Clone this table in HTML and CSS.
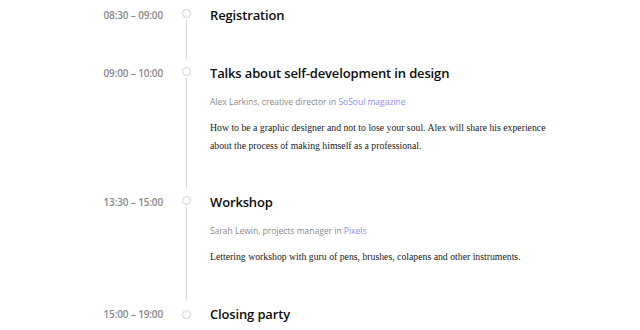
FILE: index.html
```html
<!DOCTYPE html>
<html lang="en">
<head>
<meta charset="utf-8">
<title>Schedule</title>
<link rel="stylesheet" href="styles.css">
</head>
<body>
<ol class="timeline">
  <li class="event">
    <div class="event-time">08:30 – 09:00</div>
    <div class="event-marker"><span class="dot"></span><span class="line"></span></div>
    <div class="event-body">
      <h2 class="event-title">Registration</h2>
    </div>
  </li>
  <li class="event">
    <div class="event-time">09:00 – 10:00</div>
    <div class="event-marker"><span class="dot"></span><span class="line"></span></div>
    <div class="event-body">
      <h2 class="event-title">Talks about self-development in design</h2>
      <p class="event-meta">Alex Larkins, creative director in <a href="#">SoSoul magazine</a></p>
      <p class="event-desc">How to be a graphic designer and not to lose your soul. Alex will share his experience about the process of making himself as a professional.</p>
    </div>
  </li>
  <li class="event">
    <div class="event-time">13:30 – 15:00</div>
    <div class="event-marker"><span class="dot"></span><span class="line"></span></div>
    <div class="event-body">
      <h2 class="event-title">Workshop</h2>
      <p class="event-meta">Sarah Lewin, projects manager in <a href="#">Pixels</a></p>
      <p class="event-desc">Lettering workshop with guru of pens, brushes, colapens and other instruments.</p>
    </div>
  </li>
  <li class="event">
    <div class="event-time">15:00 – 19:00</div>
    <div class="event-marker"><span class="dot"></span></div>
    <div class="event-body">
      <h2 class="event-title">Closing party</h2>
    </div>
  </li>
</ol>
</body>
</html>
```
FILE: styles.css
```css
* { box-sizing: border-box; }
html, body { margin: 0; padding: 0; background: #fff; }
body { font-family: "Open Sans", "Liberation Sans", sans-serif; color: #111; }

.timeline {
  list-style: none;
  margin: 0;
  padding: 5px 0 0 0;
}

.event {
  display: grid;
  grid-template-columns: 164px 45px 350px;
  padding-bottom: 38px;
}
.event:nth-child(2) { padding-bottom: 37px; }
.event:last-child { padding-bottom: 0; }

.event-time {
  text-align: right;
  font-size: 10px;
  letter-spacing: -0.15px;
  font-weight: 600;
  color: #8a8a8a;
  line-height: 20px;
  padding-right: 1px;
}

.event-marker {
  display: flex;
  flex-direction: column;
  align-items: center;
  padding-top: 4px;
  margin-bottom: -36px;
}
.event:last-child .event-marker { margin-bottom: 0; padding-top: 6px; }

.dot {
  width: 9px;
  height: 9px;
  border: 1px solid #cfcfcf;
  border-radius: 50%;
  background: #fff;
  flex: none;
}
.line {
  flex: 1;
  width: 1px;
  background: #d6d6d6;
  margin: 2px 0 2px;
}

.event-body { padding-left: 1px; }

.event-title {
  margin: 0;
  font-size: 13px;
  letter-spacing: -0.15px;
  font-weight: 600;
  line-height: 20px;
  color: #0d0d0d;
}

.event-meta {
  margin: 11px 0 0;
  font-size: 8.5px;
  line-height: 16px;
  color: #8a8a8a;
}
.event-meta a {
  color: #8d8df7;
  text-decoration: none;
}

.event-desc {
  margin: 9px 0 0;
  font-family: "Liberation Serif", serif;
  font-size: 9.75px;
  line-height: 18px;
  color: #222;
}
```
